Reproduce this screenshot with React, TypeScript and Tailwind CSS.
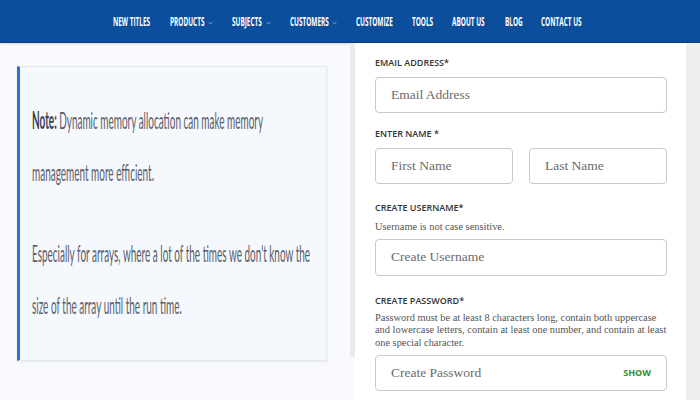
import React from "react";

const navItems = [
    { label: "NEW TITLES", w: "w-[38px]", menu: false },
    { label: "PRODUCTS", w: "w-[35px]", menu: true },
    { label: "SUBJECTS", w: "w-[31px]", menu: true },
    { label: "CUSTOMERS", w: "w-[39px]", menu: true },
    { label: "CUSTOMIZE", w: "w-[37px]", menu: false },
    { label: "TOOLS", w: "w-[21px]", menu: false },
    { label: "ABOUT US", w: "w-[34px]", menu: false },
    { label: "BLOG", w: "w-[17px]", menu: false },
    { label: "CONTACT US", w: "w-[41px]", menu: false },
];

const Chevron = () => (
    <svg width="5" height="4" viewBox="0 0 5 4" className="ml-[3px] mt-[2px] shrink-0">
        <path d="M0.5 0.8 L2.5 3 L4.5 0.8" fill="none" stroke="#7fa3d3" strokeWidth="0.9" />
    </svg>
);

const Label = ({ children }: { children: React.ReactNode }) => (
    <div className="text-[9px] leading-[12px] font-semibold text-[#333] font-['Open_Sans',sans-serif]">{children}</div>
);

const Field = ({ placeholder, className = "", right }: { placeholder: string; className?: string; right?: React.ReactNode }) => (
    <div className={`h-[36px] border border-[#c9c9c9] rounded-[4px] bg-white flex items-center justify-between pl-[15px] pr-[15px] ${className}`}>
        <span className="text-[13.5px] text-[#6b6b6b] font-['Liberation_Serif',serif]">{placeholder}</span>
        {right}
    </div>
);

const Help = ({ children }: { children: React.ReactNode }) => (
    <p className="text-[10.4px] leading-[12.5px] text-[#555] font-['Liberation_Serif',serif]">{children}</p>
);

export default function App() {
    return (
        <div className="w-[700px] h-[400px] overflow-hidden bg-[#f8fafd] flex flex-col">
            <nav className="h-[43px] shrink-0 bg-[#0b4f9c] border-b border-[#083f7e] shadow-[0_1px_2px_rgba(0,0,0,0.15)] flex items-center pl-[113px] pt-[2px] gap-[19px] overflow-hidden">
                {navItems.map((item) => (
                    <div key={item.label} className="flex items-center shrink-0">
                        <span className={`${item.w} flex items-center h-[14px] leading-none`}>
                            <span className="shrink-0 whitespace-nowrap text-[11.5px] leading-[14px] font-bold text-white font-['Open_Sans',sans-serif] scale-x-[0.56] origin-left">
                                {item.label}
                            </span>
                        </span>
                        {item.menu && <Chevron />}
                    </div>
                ))}
            </nav>

            <div className="flex flex-1">
                <div className="w-[350px] shrink-0 pt-[23px] pl-[17px]">
                    <div className="w-[310px] h-[295px] bg-[#f5f8fd] border border-[#e4e8ef] border-l-[3px] border-l-[#2f6fd8] shadow-[0_1px_2px_rgba(0,0,0,0.08)] pt-[27px] pl-[12px] overflow-hidden">
                        <div className="scale-x-[0.415] origin-left whitespace-nowrap text-[24px] leading-[52px] text-[#5a5d69] font-['Lato',sans-serif]">
                            <p>
                                <b className="text-[#3c3e4a]">Note:</b> Dynamic memory allocation can make memory
                                <br />
                                management more efficient.
                            </p>
                            <p className="mt-[29px]">
                                Especially for arrays, where a lot of the times we don't know the
                                <br />
                                size of the array until the run time.
                            </p>
                        </div>
                    </div>
                </div>

                <div className="w-[5px] shrink-0 bg-[#ebebeb] mb-[43px]"></div>

                <div className="w-[331px] shrink-0 bg-white pl-[20px] pr-[19px] pt-[14px]">
                    <Label>EMAIL ADDRESS*</Label>
                    <Field placeholder="Email Address" className="mt-[8px]" />

                    <div className="mt-[15px]">
                        <Label>ENTER NAME *</Label>
                    </div>
                    <div className="mt-[8px] flex gap-[16px]">
                        <Field placeholder="First Name" className="flex-1" />
                        <Field placeholder="Last Name" className="flex-1" />
                    </div>

                    <div className="mt-[18px]">
                        <Label>CREATE USERNAME*</Label>
                    </div>
                    <div className="mt-[7px]">
                        <Help>Username is not case sensitive.</Help>
                    </div>
                    <Field placeholder="Create Username" className="mt-[5px] h-[37px]" />

                    <div className="mt-[19px]">
                        <Label>CREATE PASSWORD*</Label>
                    </div>
                    <div className="mt-[5px]">
                        <Help>
                            Password must be at least 8 characters long, contain both uppercase and lowercase letters, contain at least one number, and contain at least one special character.
                        </Help>
                    </div>
                    <Field
                        placeholder="Create Password"
                        className="mt-[6px]"
                        right={<span className="text-[9px] font-bold text-[#2f8f2f] font-['Open_Sans',sans-serif]">SHOW</span>}
                    />
                </div>

                <div className="flex-1 bg-[#eeeeee]"></div>
            </div>
        </div>
    );
}
